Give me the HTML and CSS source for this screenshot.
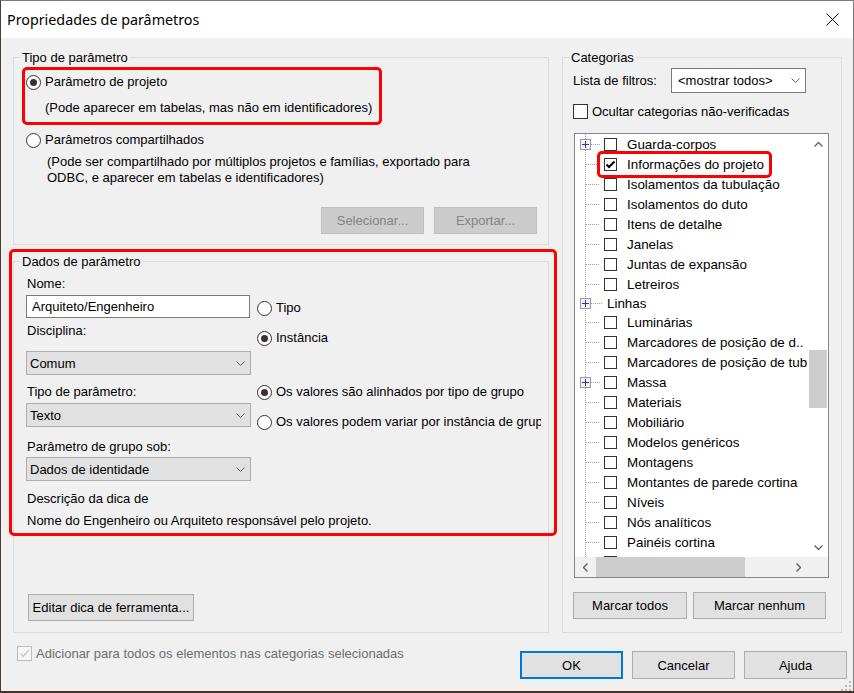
FILE: index.html
```html
<!DOCTYPE html>
<html lang="pt">
<head>
<meta charset="utf-8">
<title>Propriedades de parâmetros</title>
<link rel="stylesheet" href="styles.css">
</head>
<body>
<div class="dialog">
  <div class="titlebar">
    <span class="title">Propriedades de parâmetros</span>
    <svg class="close" width="13" height="13" viewBox="0 0 13 13"><path d="M0.5 0.5L12.5 12.5M12.5 0.5L0.5 12.5" stroke="#000" stroke-width="1" fill="none"/></svg>
  </div>
  <div class="content">
    <div class="columns">
      <div class="leftcol">
        <div class="group g1">
          <div class="legend">Tipo de parâmetro</div>
          <div class="opt opt1"><span class="radio on"></span><span>Parâmetro de projeto</span></div>
          <div class="desc desc1">(Pode aparecer em tabelas, mas não em identificadores)</div>
          <div class="opt opt2"><span class="radio"></span><span>Parâmetros compartilhados</span></div>
          <div class="desc desc2">(Pode ser compartilhado por múltiplos projetos e famílias, exportado para<br>ODBC, e aparecer em tabelas e identificadores)</div>
          <div class="g1btns"><button class="btn disabled">Selecionar...</button><button class="btn disabled">Exportar...</button></div>
        </div>
        <div class="group g2">
          <div class="legend">Dados de parâmetro</div>
          <div class="g2body">
            <div class="fields">
              <div class="lbl l-nome">Nome:</div>
              <div class="input">Arquiteto/Engenheiro</div>
              <div class="lbl l-disc">Disciplina:</div>
              <div class="combo c-disc"><span>Comum</span><svg class="chev" width="9" height="5" viewBox="0 0 9 5"><path d="M0.5 0.5L4.5 4.5L8.5 0.5" fill="none" stroke="#606060"/></svg></div>
              <div class="lbl l-tipo">Tipo de parâmetro:</div>
              <div class="combo c-tipo"><span>Texto</span><svg class="chev" width="9" height="5" viewBox="0 0 9 5"><path d="M0.5 0.5L4.5 4.5L8.5 0.5" fill="none" stroke="#606060"/></svg></div>
              <div class="lbl l-grupo">Parâmetro de grupo sob:</div>
              <div class="combo c-grupo"><span>Dados de identidade</span><svg class="chev" width="9" height="5" viewBox="0 0 9 5"><path d="M0.5 0.5L4.5 4.5L8.5 0.5" fill="none" stroke="#606060"/></svg></div>
              <div class="lbl l-desc">Descrição da dica de</div>
              <div class="lbl l-dica">Nome do Engenheiro ou Arquiteto responsável pelo projeto.</div>
            </div>
            <div class="radios">
              <div class="opt r-tipo"><span class="radio"></span><span>Tipo</span></div>
              <div class="opt r-inst"><span class="radio on"></span><span>Instância</span></div>
              <div class="opt r-alin"><span class="radio on"></span><span>Os valores são alinhados por tipo de grupo</span></div>
              <div class="opt r-var"><span class="radio"></span><span>Os valores podem variar por instância de grupo</span></div>
            </div>
          </div>
          <div class="editrow"><button class="btn edit">Editar dica de ferramenta...</button></div>
        </div>
      </div>
      <div class="group g3">
        <div class="legend">Categorias</div>
        <div class="filter">
          <span class="flbl">Lista de filtros:</span>
          <div class="combo white"><span>&lt;mostrar todos&gt;</span><svg class="chev" width="9" height="5" viewBox="0 0 9 5"><path d="M0.5 0.5L4.5 4.5L8.5 0.5" fill="none" stroke="#606060"/></svg></div>
        </div>
        <div class="hide"><span class="chk"></span><span>Ocultar categorias não-verificadas</span></div>
        <div class="list">
          <div class="tree">
            <div class="row"><span class="sp5"></span><svg class="plus" width="11" height="11" viewBox="0 0 11 11"><rect x="0.5" y="0.5" width="10" height="10" fill="#f2f2f2" stroke="#9a9a9a"/><path d="M2 5.5H9M5.5 2V9" stroke="#1f3f99"/></svg><span class="conn c9"></span><span class="cb"></span><span class="txt">Guarda-corpos</span></div>
            <div class="row"><span class="sp11"></span><span class="conn c14"></span><span class="cb"><svg width="11" height="11" viewBox="0 0 11 11"><path d="M1.5 5.5L4 8L9.5 2.5" fill="none" stroke="#000" stroke-width="2"/></svg></span><span class="txt">Informações do projeto</span></div>
            <div class="row"><span class="sp11"></span><span class="conn c14"></span><span class="cb"></span><span class="txt">Isolamentos da tubulação</span></div>
            <div class="row"><span class="sp11"></span><span class="conn c14"></span><span class="cb"></span><span class="txt">Isolamentos do duto</span></div>
            <div class="row"><span class="sp11"></span><span class="conn c14"></span><span class="cb"></span><span class="txt">Itens de detalhe</span></div>
            <div class="row"><span class="sp11"></span><span class="conn c14"></span><span class="cb"></span><span class="txt">Janelas</span></div>
            <div class="row"><span class="sp11"></span><span class="conn c14"></span><span class="cb"></span><span class="txt">Juntas de expansão</span></div>
            <div class="row"><span class="sp11"></span><span class="conn c14"></span><span class="cb"></span><span class="txt">Letreiros</span></div>
            <div class="row short"><span class="sp5"></span><svg class="plus" width="11" height="11" viewBox="0 0 11 11"><rect x="0.5" y="0.5" width="10" height="10" fill="#f2f2f2" stroke="#9a9a9a"/><path d="M2 5.5H9M5.5 2V9" stroke="#1f3f99"/></svg><span class="conn c12"></span><span class="txt parent">Linhas</span></div>
            <div class="row short"><span class="sp11"></span><span class="conn c14"></span><span class="cb"></span><span class="txt">Luminárias</span></div>
            <div class="row"><span class="sp11"></span><span class="conn c14"></span><span class="cb"></span><span class="txt">Marcadores de posição de d..</span></div>
            <div class="row"><span class="sp11"></span><span class="conn c14"></span><span class="cb"></span><span class="txt">Marcadores de posição de tub</span></div>
            <div class="row"><span class="sp5"></span><svg class="plus" width="11" height="11" viewBox="0 0 11 11"><rect x="0.5" y="0.5" width="10" height="10" fill="#f2f2f2" stroke="#9a9a9a"/><path d="M2 5.5H9M5.5 2V9" stroke="#1f3f99"/></svg><span class="conn c9"></span><span class="cb"></span><span class="txt">Massa</span></div>
            <div class="row"><span class="sp11"></span><span class="conn c14"></span><span class="cb"></span><span class="txt">Materiais</span></div>
            <div class="row"><span class="sp11"></span><span class="conn c14"></span><span class="cb"></span><span class="txt">Mobiliário</span></div>
            <div class="row"><span class="sp11"></span><span class="conn c14"></span><span class="cb"></span><span class="txt">Modelos genéricos</span></div>
            <div class="row"><span class="sp11"></span><span class="conn c14"></span><span class="cb"></span><span class="txt">Montagens</span></div>
            <div class="row"><span class="sp11"></span><span class="conn c14"></span><span class="cb"></span><span class="txt">Montantes de parede cortina</span></div>
            <div class="row"><span class="sp11"></span><span class="conn c14"></span><span class="cb"></span><span class="txt">Níveis</span></div>
            <div class="row"><span class="sp11"></span><span class="conn c14"></span><span class="cb"></span><span class="txt">Nós analíticos</span></div>
            <div class="row"><span class="sp11"></span><span class="conn c14"></span><span class="cb"></span><span class="txt">Painéis cortina</span></div>
            <div class="row"><span class="sp11"></span><span class="conn c14"></span><span class="cb"></span></div>
          </div>
          <div class="vscroll">
            <div class="sbtn"><svg width="9" height="5" viewBox="0 0 9 5"><path d="M0.5 4.5L4.5 0.5L8.5 4.5" fill="none" stroke="#606060" stroke-width="1.3"/></svg></div>
            <div class="vgap"></div>
            <div class="vthumb"></div>
            <div class="fill"></div>
            <div class="sbtn"><svg width="9" height="5" viewBox="0 0 9 5"><path d="M0.5 0.5L4.5 4.5L8.5 0.5" fill="none" stroke="#606060" stroke-width="1.3"/></svg></div>
          </div>
          <div class="hscroll">
            <div class="sbtn"><svg width="5" height="9" viewBox="0 0 5 9"><path d="M4.5 0.5L0.5 4.5L4.5 8.5" fill="none" stroke="#606060" stroke-width="1.3"/></svg></div>
            <div class="hthumb"></div>
            <div class="fill"></div>
            <div class="sbtn"><svg width="5" height="9" viewBox="0 0 5 9"><path d="M0.5 0.5L4.5 4.5L0.5 8.5" fill="none" stroke="#606060" stroke-width="1.3"/></svg></div>
          </div>
          <div class="corner"></div>
        </div>
        <div class="markbtns"><button class="btn mt">Marcar todos</button><button class="btn mn">Marcar nenhum</button></div>
      </div>
    </div>
    <div class="footer">
      <div class="addall"><span class="chk dis"><svg width="13" height="13" viewBox="0 0 13 13"><path d="M2.5 6.5L5 9.5L11 3" fill="none" stroke="#c4c4c4" stroke-width="1.2"/></svg></span><span>Adicionar para todos os elementos nas categorias selecionadas</span></div>
      <div class="actions"><button class="btn act ok">OK</button><button class="btn act">Cancelar</button><button class="btn act">Ajuda</button></div>
    </div>
  </div>
  <div class="hl hl1"></div>
  <div class="hl hl2"></div>
  <div class="hl hl3"></div>
  <svg class="grip" width="10" height="10" viewBox="0 0 10 10"><g fill="#b8b8b8"><rect x="8" y="0" width="2" height="2"/><rect x="4" y="4" width="2" height="2"/><rect x="8" y="4" width="2" height="2"/><rect x="0" y="8" width="2" height="2"/><rect x="4" y="8" width="2" height="2"/><rect x="8" y="8" width="2" height="2"/></g></svg>
</div>
</body>
</html>
```

FILE: styles.css
```css
* { box-sizing: border-box; }
html, body { margin: 0; padding: 0; }
body {
  width: 854px;
  height: 693px;
  overflow: hidden;
  background: #46332a;
  font-family: "Liberation Sans", Arial, sans-serif;
  font-size: 13px;
  color: #000;
}
.dialog {
  position: relative;
  width: 854px;
  height: 691px;
  border: 1px solid #7c7c7c;
  border-left-color: #4e3d35;
  border-bottom: 0;
  background: #f0f0f0;
  display: flex;
  flex-direction: column;
}
.titlebar {
  flex: none;
  height: 37px;
  background: #fff;
  display: flex;
  align-items: center;
  justify-content: space-between;
  padding: 0 14px 0 6px;
}
.title {
  font-family: "Noto Sans", sans-serif;
  font-size: 14.3px;
  color: #000;
}
.content {
  flex: 1;
  padding: 19px 6px 0 12px;
}
.columns { display: flex; gap: 13px; align-items: flex-start; }
.leftcol { width: 536px; flex: none; }

.group {
  border: 1px solid #dcdcdc;
}
.legend {
  width: max-content;
  margin: -8px 0 0 6px;
  padding: 0 2px;
  line-height: 15px;
  background: #f0f0f0;
}
.g1 { height: 188px; }
.g2 { height: 372px; margin-top: 16px; }
.g3 { width: 280px; height: 576px; flex: none; }

.opt {
  display: flex;
  align-items: center;
  height: 16px;
  line-height: 16px;
  white-space: nowrap;
}
.radio {
  flex: none;
  width: 15px;
  height: 15px;
  border: 1px solid #333;
  border-radius: 50%;
  background: #fff;
  margin-right: 4px;
  display: flex;
  align-items: center;
  justify-content: center;
}
.radio.on::after {
  content: "";
  width: 7px;
  height: 7px;
  border-radius: 50%;
  background: #3a3130;
}
.desc { line-height: 16px; white-space: nowrap; }
.opt1 { margin: 9px 0 0 12px; }
.desc1 { margin: 10px 0 0 31px; }
.opt2 { margin: 16px 0 0 12px; }
.desc2 { margin: 6px 0 0 33px; }
.g1btns {
  display: flex;
  justify-content: flex-end;
  gap: 10px;
  margin-top: 21px;
  padding-right: 11px;
}

.btn {
  font: inherit;
  color: #000;
  background: #e1e1e1;
  border: 1px solid #adadad;
  padding: 0;
  margin: 0;
}
.btn.disabled {
  width: 103px;
  height: 27px;
  background: #cccccc;
  border-color: #bfbfbf;
  color: #838383;
}

.g2body { display: flex; }
.fields { width: 225px; margin-left: 12px; flex: none; }
.lbl { line-height: 16px; padding-left: 1px; white-space: nowrap; }
.l-nome { margin-top: 7px; }
.input {
  margin-top: 3px;
  width: 224px;
  height: 23px;
  background: #fff;
  border: 1px solid #7a7a7a;
  padding-left: 5px;
  line-height: 21px;
}
.l-disc { margin-top: 5px; }
.combo {
  height: 24px;
  width: 225px;
  background: #e1e1e1;
  border: 1px solid #adadad;
  display: flex;
  align-items: center;
  justify-content: space-between;
  padding: 0 5px 0 3px;
  white-space: nowrap;
}
.chev { flex: none; }
.c-disc { margin-top: 12px; }
.l-tipo { margin-top: 9px; }
.c-tipo { margin-top: 3px; }
.l-grupo { margin-top: 12px; }
.c-grupo { margin-top: 2px; }
.l-desc { margin-top: 10px; }
.l-dica { margin-top: 6px; }

.radios { margin-left: 6px; width: 284px; overflow: hidden; }
.r-tipo { margin-top: 31px; }
.r-inst { margin-top: 14px; }
.r-alin { margin-top: 38px; }
.r-var { margin-top: 14px; }

.editrow { margin: 65px 0 0 14px; }
.btn.edit { width: 166px; height: 27px; }

.filter { display: flex; align-items: flex-start; margin: 3px 0 0 10px; }
.flbl { width: 98px; line-height: 16px; padding-top: 5px; }
.combo.white {
  width: 135px;
  height: 25px;
  background: #fff;
  border-color: #7a7a7a;
  padding: 0 5px 0 6px;
}
.hide {
  display: flex;
  align-items: center;
  height: 16px;
  margin: 10px 0 0 10px;
}
.chk {
  flex: none;
  width: 15px;
  height: 15px;
  border: 1px solid #333;
  background: #fff;
  margin-right: 4px;
  display: flex;
  align-items: center;
  justify-content: center;
}
.chk.dis { border-color: #bcbcbc; background: #f7f7f7; }

.list {
  margin: 14px 0 0 11px;
  width: 255px;
  height: 445px;
  border: 1px solid #828790;
  background: #fff;
  display: grid;
  grid-template-columns: 233px 20px;
  grid-template-rows: 423px 20px;
}
.tree {
  overflow: hidden;
  background-color: #fff;
  background-image: repeating-linear-gradient(to bottom, #a0a0a0 0 1px, transparent 1px 2px);
  background-size: 1px 100%;
  background-position: 10px 0;
  background-repeat: no-repeat;
  font-size: 13.4px;
}
.row {
  display: flex;
  align-items: center;
  height: 20px;
  white-space: nowrap;
}
.row.short { height: 19px; }
.sp5 { flex: none; width: 5px; }
.sp11 { flex: none; width: 11px; }
.plus { flex: none; display: block; }
.conn {
  flex: none;
  height: 1px;
  background: repeating-linear-gradient(to right, #a0a0a0 0 1px, transparent 1px 2px);
}
.c9 { width: 9px; }
.c12 { width: 12px; }
.c14 { width: 14px; }
.cb {
  flex: none;
  width: 13px;
  height: 13px;
  border: 1px solid #333;
  background: #fff;
  margin: 0 10px 0 4px;
  display: flex;
}
.cb svg { display: block; }
.txt.parent { margin-left: 4px; }

.vscroll {
  background: #fff;
  display: flex;
  flex-direction: column;
}
.sbtn {
  flex: none;
  width: 20px;
  height: 20px;
  display: flex;
  align-items: center;
  justify-content: center;
}
.vgap { flex: none; height: 196px; }
.vthumb { flex: none; height: 58px; margin: 0 1px; background: #cdcdcd; }
.fill { flex: 1; }
.hscroll {
  background: #f0f0f0;
  display: flex;
}
.hthumb { flex: none; width: 149px; margin-left: 1px; background: #cdcdcd; }
.corner { background: #f0f0f0; }

.markbtns { display: flex; gap: 6px; margin: 14px 0 0 10px; }
.btn.mt { width: 114px; height: 27px; }
.btn.mn { width: 133px; height: 27px; }

.footer {
  display: flex;
  justify-content: space-between;
  align-items: flex-start;
}
.addall {
  display: flex;
  align-items: center;
  height: 16px;
  margin: 12px 0 0 4px;
  color: #6d6d6d;
  white-space: nowrap;
}
.actions { display: flex; gap: 9px; margin-top: 18px; }
.btn.act { width: 103px; height: 28px; }
.btn.ok { border: 2px solid #0078d7; }

.hl {
  position: absolute;
  border: 3px solid #ff0000;
  border-radius: 5px;
  pointer-events: none;
}
.hl1 { left: 21px; top: 66px; width: 360px; height: 58px; }
.hl2 { left: 8px; top: 248px; width: 548px; height: 287px; }
.hl3 { left: 596px; top: 150px; width: 175px; height: 27px; }
.grip { position: absolute; left: 840px; top: 680px; }
```
